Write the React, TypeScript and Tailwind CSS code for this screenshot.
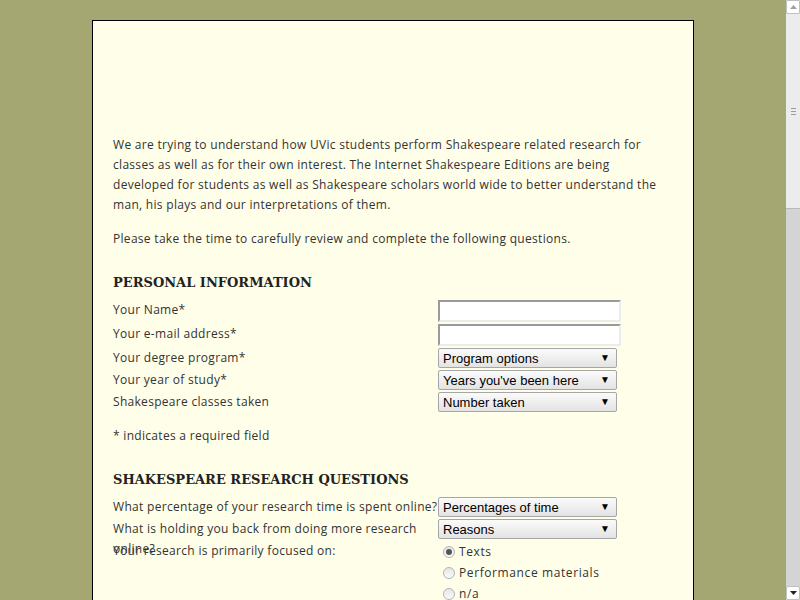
const sans = "font-['Open_Sans',sans-serif] tracking-[0.3px]";

function Select({ label }: { label: string }) {
  return (
    <div className="flex h-[20px] w-[179px] items-center justify-between rounded-[2px] border border-[#a6a6a6] bg-gradient-to-b from-[#fbfbfb] to-[#e3e3e3] pl-[4px] pr-[6px] font-['Liberation_Sans',sans-serif] text-[13px] leading-none tracking-normal text-black">
      <span>{label}</span>
      <span className="text-[10px]">▼</span>
    </div>
  );
}

function TextInput() {
  return (
    <div className="h-[22px] w-[183px] border-2 border-t-[#9a9a9a] border-l-[#9a9a9a] border-b-[#ececec] border-r-[#ececec] bg-white" />
  );
}

function Radio({ label, checked }: { label: string; checked?: boolean }) {
  return (
    <div className="flex h-[21px] items-center gap-[4px] pl-[5px]">
      <span className="flex h-[12px] w-[12px] items-center justify-center rounded-full border border-[#b3b3b3] bg-gradient-to-b from-[#e6e6e6] to-[#fafafa]">
        {checked && <span className="h-[6px] w-[6px] rounded-full bg-[#555]" />}
      </span>
      <span className="tracking-[0.6px]">{label}</span>
    </div>
  );
}

function Row({ label, children, h }: { label: string; children: React.ReactNode; h: string }) {
  return (
    <div className={`flex items-start ${h}`}>
      <div className="w-[325px] shrink-0 leading-[20px]">{label}</div>
      {children}
    </div>
  );
}

function Scrollbar() {
  return (
    <div className="flex h-[600px] w-[15px] shrink-0 flex-col border-l border-[#a0a0a0] bg-[#d4d4d4]">
      <div className="flex h-[14px] items-center justify-center rounded-[2px] border border-[#c0c0c0] bg-white">
        <svg width="7" height="4" viewBox="0 0 7 4"><path d="M0 4 L3.5 0 L7 4 Z" fill="#a0a0a0" /></svg>
      </div>
      <div className="flex h-[195px] items-center justify-center border-b border-[#b8b8b8] bg-[#ececec]">
        <div className="flex flex-col gap-[2px]">
          <div className="h-px w-[5px] bg-[#9a9a9a]" />
          <div className="h-px w-[5px] bg-[#9a9a9a]" />
          <div className="h-px w-[5px] bg-[#9a9a9a]" />
        </div>
      </div>
      <div className="flex-1" />
      <div className="flex h-[14px] items-center justify-center rounded-[2px] border border-[#c0c0c0] bg-white">
        <svg width="7" height="4" viewBox="0 0 7 4"><path d="M0 0 L3.5 4 L7 0 Z" fill="#222" /></svg>
      </div>
    </div>
  );
}

export default function App() {
  return (
    <div className="flex h-[600px] w-[800px] overflow-hidden bg-[#a5a773]">
      <div className="flex-1 overflow-hidden pl-[92px] pt-[20px]">
        <div className={`h-[620px] w-[602px] border border-black bg-[#fffee9] pl-[20px] pt-[114px] text-[12px] text-[#333] ${sans}`}>
          <p className="w-[550px] leading-[20px]">
            We are trying to understand how UVic students perform Shakespeare related research for classes as well as for their own interest. The Internet Shakespeare Editions are being developed for students as well as Shakespeare scholars world wide to better understand the man, his plays and our interpretations of them.
          </p>
          <p className="mt-[14px] leading-[20px]">Please take the time to carefully review and complete the following questions.</p>

          <h2 className="mt-[24px] font-['DejaVu_Serif',serif] text-[13px] font-bold leading-[20px] tracking-normal text-[#222]">PERSONAL INFORMATION</h2>
          <div className="mt-[7px]">
            <Row label="Your Name*" h="h-[24px]"><TextInput /></Row>
            <Row label="Your e-mail address*" h="h-[24px]"><TextInput /></Row>
            <Row label="Your degree program*" h="h-[22px]"><Select label="Program options" /></Row>
            <Row label="Your year of study*" h="h-[22px]"><Select label="Years you've been here" /></Row>
            <Row label="Shakespeare classes taken" h="h-[22px]"><Select label="Number taken" /></Row>
          </div>
          <p className="mt-[12px] leading-[20px]">* indicates a required field</p>

          <h2 className="mt-[24px] font-['DejaVu_Serif',serif] text-[13px] font-bold leading-[20px] tracking-normal text-[#222]">SHAKESPEARE RESEARCH QUESTIONS</h2>
          <div className="mt-[7px]">
            <Row label="What percentage of your research time is spent online?" h="h-[22px]"><Select label="Percentages of time" /></Row>
            <Row label="What is holding you back from doing more research online?" h="h-[22px]"><Select label="Reasons" /></Row>
            <div className="flex items-start">
              <div className="w-[325px] shrink-0 leading-[20px]">Your research is primarily focused on:</div>
              <div>
                <Radio label="Texts" checked />
                <Radio label="Performance materials" />
                <Radio label="n/a" />
              </div>
            </div>
          </div>
        </div>
      </div>
      <Scrollbar />
    </div>
  );
}
